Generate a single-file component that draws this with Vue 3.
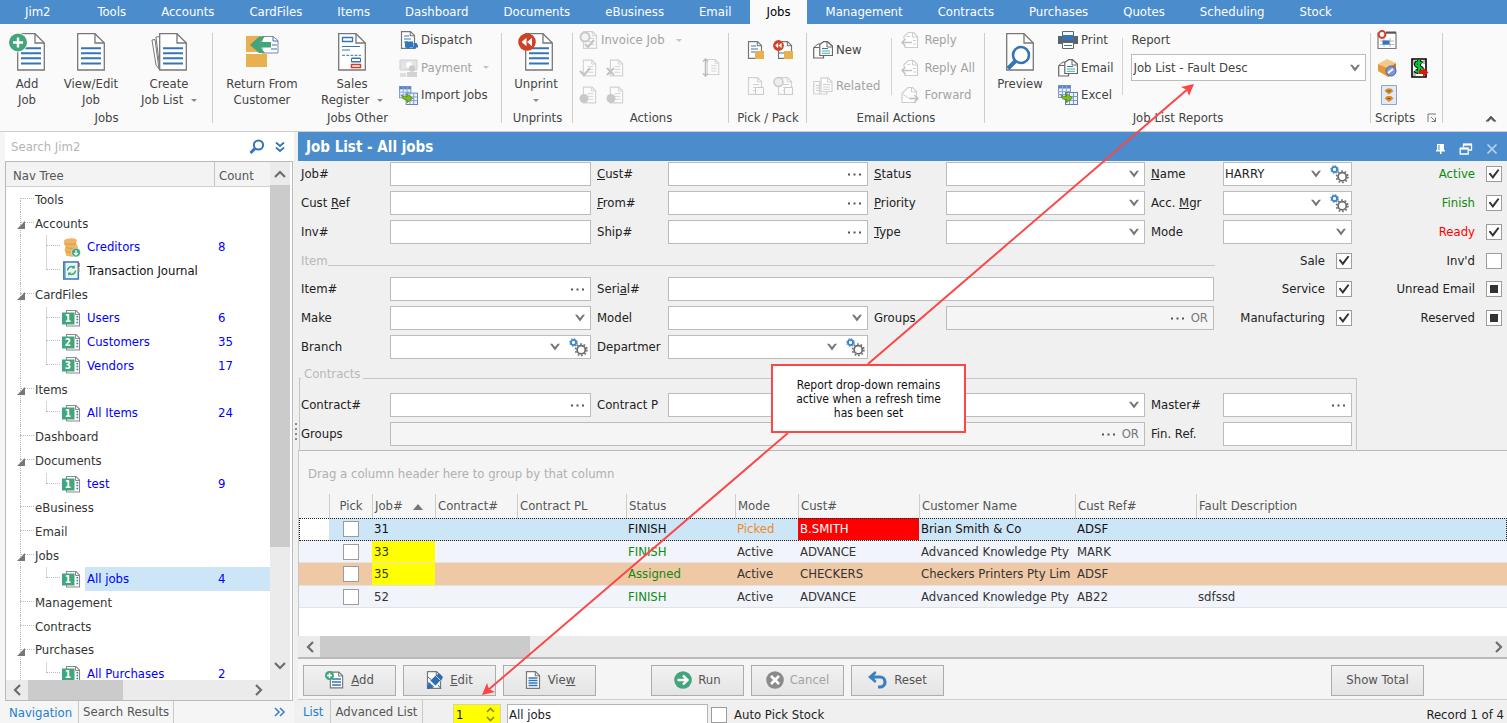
<script setup>
import { ref } from 'vue'

const tabs = ['Jim2', 'Tools', 'Accounts', 'CardFiles', 'Items', 'Dashboard', 'Documents', 'eBusiness', 'Email', 'Jobs', 'Management', 'Contracts', 'Purchases', 'Quotes', 'Scheduling', 'Stock']

const tree = [
  { t: 'Tools' },
  { t: 'Accounts', open: true },
  { t: 'Creditors', n: 8, icon: 'coins', child: true, more: true },
  { t: 'Transaction Journal', icon: 'journal', child: true, plain: true },
  { t: 'CardFiles', open: true },
  { t: 'Users', n: 6, icon: 'list', num: 1, child: true, more: true },
  { t: 'Customers', n: 35, icon: 'list', num: 2, child: true, more: true },
  { t: 'Vendors', n: 17, icon: 'list', num: 3, child: true },
  { t: 'Items', open: true },
  { t: 'All Items', n: 24, icon: 'list', num: 1, child: true },
  { t: 'Dashboard' },
  { t: 'Documents', open: true },
  { t: 'test', n: 9, icon: 'list', num: 1, child: true },
  { t: 'eBusiness' },
  { t: 'Email' },
  { t: 'Jobs', open: true },
  { t: 'All jobs', n: 4, icon: 'list', num: 1, child: true, sel: true },
  { t: 'Management' },
  { t: 'Contracts' },
  { t: 'Purchases', open: true },
  { t: 'All Purchases', n: 2, icon: 'list', num: 1, child: true }
]

// label: [before, access key, after]; row and col are grid lines, span is the number of tracks
const mainFields = [
  { id: 'job', label: ['Job#'], row: 1, col: 1, kind: 'text' },
  { id: 'cust', label: ['', 'C', 'ust#'], row: 1, col: 3, kind: 'dots' },
  { id: 'status', label: ['', 'S', 'tatus'], row: 1, col: 5, kind: 'select' },
  { id: 'name', label: ['', 'N', 'ame'], row: 1, col: 7, kind: 'gear', value: 'HARRY' },
  { id: 'custref', label: ['Cust ', 'R', 'ef'], row: 2, col: 1, kind: 'text' },
  { id: 'from', label: ['', 'F', 'rom#'], row: 2, col: 3, kind: 'dots' },
  { id: 'priority', label: ['', 'P', 'riority'], row: 2, col: 5, kind: 'select' },
  { id: 'accmgr', label: ['Acc. ', 'M', 'gr'], row: 2, col: 7, kind: 'gear' },
  { id: 'inv', label: ['Inv#'], row: 3, col: 1, kind: 'text' },
  { id: 'ship', label: ['Ship#'], row: 3, col: 3, kind: 'dots' },
  { id: 'type', label: ['', 'T', 'ype'], row: 3, col: 5, kind: 'select' },
  { id: 'mode', label: ['Mode'], row: 3, col: 7, kind: 'select' },
  { id: 'item', label: ['Item#'], row: 5, col: 1, kind: 'dots' },
  { id: 'serial', label: ['Seri', 'a', 'l#'], row: 5, col: 3, kind: 'text', span: 4, wide: true },
  { id: 'make', label: ['Make'], row: 6, col: 1, kind: 'select' },
  { id: 'model', label: ['Model'], row: 6, col: 3, kind: 'select' },
  { id: 'groups', label: ['Groups'], row: 6, col: 5, kind: 'or', span: 2, wide: true },
  { id: 'branch', label: ['Branch'], row: 7, col: 1, kind: 'gear' },
  { id: 'department', label: ['Departmer'], row: 7, col: 3, kind: 'gear' }
]
const contractFields = [
  { id: 'contract', label: ['Contract#'], row: 1, col: 1, kind: 'dots' },
  { id: 'contractpl', label: ['Contract P'], row: 1, col: 3, kind: 'select', span: 3 },
  { id: 'master', label: ['Master#'], row: 1, col: 7, kind: 'dots' },
  { id: 'cgroups', label: ['Groups'], row: 2, col: 1, kind: 'or', span: 5 },
  { id: 'finref', label: ['Fin. Ref.'], row: 2, col: 7, kind: 'text' }
]
const fieldSets = { main: mainFields, contracts: contractFields }

const checks = ref([
  { t: 'Active', row: 1, col: 9, on: true, tone: 'green' },
  { t: 'Finish', row: 2, col: 9, on: true, tone: 'green' },
  { t: 'Ready', row: 3, col: 9, on: true, tone: 'red' },
  { t: 'Sale', row: 4, col: 8, on: true },
  { t: "Inv'd", row: 4, col: 9, on: false },
  { t: 'Service', row: 5, col: 8, on: true },
  { t: 'Unread Email', row: 5, col: 9, on: false, mixed: true },
  { t: 'Manufacturing', row: 6, col: 8, on: true },
  { t: 'Reserved', row: 6, col: 9, on: false, mixed: true }
])

const jobs = [
  { id: 31, status: 'FINISH', mode: 'Picked', cust: 'B.SMITH', name: 'Brian Smith & Co', ref: 'ADSF', fault: '', cls: 'current' },
  { id: 33, status: 'FINISH', mode: 'Active', cust: 'ADVANCE', name: 'Advanced Knowledge Pty', ref: 'MARK', fault: '', flag: true },
  { id: 35, status: 'Assigned', mode: 'Active', cust: 'CHECKERS', name: 'Checkers Printers Pty Lim', ref: 'ADSF', fault: '', flag: true, cls: 'assigned' },
  { id: 52, status: 'FINISH', mode: 'Active', cust: 'ADVANCE', name: 'Advanced Knowledge Pty', ref: 'AB22', fault: 'sdfssd' }
]

const place = f => ({ gridRow: f.row, gridColumn: `${f.col + 1} / span ${f.span || 1}` })
const placeLabel = f => ({ gridRow: f.row, gridColumn: f.col })
</script>

<template>
  <svg class="defs" aria-hidden="true">
    <symbol id="page" viewBox="0 0 28 38">
      <path d="M.7 .7H18L27.3 10V37H.7Z" fill="#fff" stroke="#777" stroke-width="1.3" />
      <path d="M18 .7V10h9.3" fill="none" stroke="#777" stroke-width="1.3" />
    </symbol>
    <symbol id="lines" viewBox="0 0 28 38">
      <path d="M4 15.3h20M4 20.3h20M4 25.3h20M4 30.5h20" stroke="#3474b9" stroke-width="1.9" />
    </symbol>
    <symbol id="rewind" viewBox="0 0 18 18">
      <circle cx="9" cy="9" r="8.8" fill="#cf4127" />
      <path d="M8.5 4.7v8.6L3.6 9zM14 4.7v8.6L9.1 9z" fill="#fff" />
    </symbol>
    <symbol id="spage" viewBox="0 0 18 18">
      <path d="M2.5 .6h9l4 4v12.8h-13z" fill="#fff" stroke="currentColor" stroke-width="1.2" />
      <path d="M11.3 .6v4.2h4.2" fill="none" stroke="currentColor" stroke-width="1.1" />
    </symbol>
    <symbol id="mail" viewBox="0 0 20 18">
      <path d="M.7 6.5h5.5M.7 6.5V17h9.8v-2.2" fill="none" stroke="#666" stroke-width="1.2" />
      <path d="M.7 6.5 5 3h2" fill="none" stroke="#666" />
      <path d="M6.8 3.5 10.5.7h4l5 4.5v9.3H6.8z" fill="#fff" stroke="#666" stroke-width="1.2" />
      <path d="M14 1v5h5" fill="none" stroke="#666" />
      <path d="M9 7.5h6" stroke="#3474b9" /><path d="M9 10h8M9 12.3h8" stroke="#45b28a" />
    </symbol>
    <symbol id="related" viewBox="0 0 20 18">
      <path d="M.7 4.5h6V17h7V14M.7 4.5V17h8" fill="none" stroke="#cfcfcf" stroke-width="1.2" />
      <path d="M8 .8h7l4 4v9.7H8z" fill="#fff" stroke="#cfcfcf" stroke-width="1.2" />
      <path d="M14.5 1v4H19M10 7.5h7M10 10h7M10 12.3h7M3 8.5h4M3 11h4M3 13.5h4" fill="none" stroke="#cfcfcf" />
    </symbol>
    <symbol id="reply" viewBox="0 0 18 18">
      <path d="M3 8V5.500L7.500 1.500h5l4 4V16.500H4V15" fill="#fff" stroke="#cdcdcd" stroke-width="1.2" />
      <path d="M11.500 1.500v4.500h5M6 5.500h3M12 9.500h3M12 13h3" fill="none" stroke="#cdcdcd" />
      <path d="M11 11.500H1M4.500 8 1 11.500 4.500 15" fill="none" stroke="#c2c2c2" stroke-width="1.500" />
    </symbol>
    <symbol id="forward" viewBox="0 0 18 18">
      <path d="M1 7.500 7 1.500h4.500l4 4V9M15 16.500H1v-9" fill="#fff" stroke="#cdcdcd" stroke-width="1.2" />
      <path d="M1.500 8 7 12M10.500 1.500V6h5" fill="none" stroke="#cdcdcd" />
      <path d="M8 12.500h9M13.500 9l3.500 3.500L13.500 16" fill="none" stroke="#bdbdbd" stroke-width="1.500" />
    </symbol>
    <symbol id="sheet" viewBox="0 0 20 20">
      <rect x=".5" y=".5" width="12" height="12" fill="#e8f0fa" stroke="#7a9bd0" />
      <path d="M.5 2h12" stroke="#5b83c6" stroke-width="3" />
      <path d="M4.500 1v11M8.500 1v11M.5 6.500h12M.5 9.500h12" stroke="#8fabd8" />
      <rect x="7.500" y="7.500" width="12" height="12" fill="#eef3fb" stroke="#5d7fb8" />
      <path d="M11.500 8v11M15.500 8v11M7.500 11.500h12M7.500 15.500h12" stroke="#7d9acb" />
      <path d="M3 9.500c1 2 3 2 5.500 1.700V8.300l6 4.700-6 4.500v-3C5.500 15 3 13.500 3 9.500z" fill="#7fbf1d" stroke="#4c8207" stroke-width=".8" />
    </symbol>
    <symbol id="chev" viewBox="0 0 12 8"><path d="M1 .8h2.300L6 4l2.700-3.200H11L6 7.500z" fill="#757575" /></symbol>
    <symbol id="dots" viewBox="0 0 14 3"><path d="M0 .5h2v2H0zM5.500 .5h2v2h-2zM11 .5h2v2h-2z" fill="#555" /></symbol>
    <symbol id="gears" viewBox="0 0 19 19">
      <circle cx="4.500" cy="4.500" r="2.600" fill="none" stroke="#3d84c6" stroke-width="1.900" />
      <circle cx="4.500" cy="4.500" r="3.900" fill="none" stroke="#3d84c6" stroke-width="1" stroke-dasharray="1.500 1.560" />
      <circle cx="12.200" cy="11.800" r="4.100" fill="none" stroke="#6d6d6d" stroke-width="1.800" />
      <circle cx="12.200" cy="11.800" r="5.700" fill="none" stroke="#6d6d6d" stroke-width="1.600" stroke-dasharray="1.700 1.880" />
    </symbol>
    <symbol id="coins" viewBox="0 0 19 19">
      <path d="M2 2.500C5-.5 13-.5 15 2l-1 3.500 2 3-.500 3L17 15l-1 2.500c-3 1.500-9 1.500-12 0l-.500-3L2.500 12l1-3L2 6z" fill="#edb565" />
      <path d="M3 5.500c3 1.200 8 1.200 11 0M4 9.500c3 1.200 8 1.200 11 0M4 13.500c3 1.200 6 1 8 .500" stroke="#d99c45" fill="none" />
      <circle cx="14" cy="14.500" r="4.500" fill="#45a67e" stroke="#fff" stroke-width=".6" />
      <path d="M14 12v5M12 15l2 2 2-2" stroke="#fff" fill="none" stroke-width="1.200" />
    </symbol>
    <symbol id="journal" viewBox="0 0 19 19">
      <rect x="1.800" y="1" width="14.500" height="17" fill="#eef6f3" stroke="#4180bd" stroke-width="1.600" />
      <path d="M3 1v17" stroke="#4180bd" /><path d="M17.200 2v4" stroke="#d24a35" /><path d="M17.200 7v4" stroke="#e8b04c" />
      <path d="M5.500 9.500a4 4 0 0 1 6.500-3M13.500 9.500a4 4 0 0 1-6.500 3" fill="none" stroke="#2fa878" stroke-width="1.500" />
      <path d="M12.800 4v3.500H9.500zM6.200 15v-3.500h3.300z" fill="#2fa878" />
    </symbol>
    <symbol id="list" viewBox="0 0 19 19">
      <path d="M4.500 4V1.500h9.500l3.500 3.500v12H4.500V15" fill="#fff" stroke="#8a8a8a" stroke-width="1.100" />
      <path d="M13.500 1.500V5.500h4" fill="none" stroke="#8a8a8a" />
      <path d="M14.500 7.800h1.600M14.500 10.600h1.600M14.500 13.400h1.600" stroke="#3474b9" stroke-width="1.500" />
      <rect y="3.500" width="12.500" height="12" fill="#43a57c" />
    </symbol>
    <symbol id="foldpage" viewBox="0 0 18 18">
      <path d="M2.500.6h9l4 4v12.800h-13z" fill="#fbfbfb" stroke="#d2d2d2" stroke-width="1.200" />
      <path d="M11.300.6v4.200h4.200M7 7.500h6M7 10.500h6M7 13.500h6" fill="none" stroke="#d2d2d2" />
    </symbol>
  </svg>

  <div class="app">
    <nav class="tabs" aria-label="Ribbon tabs">
      <button v-for="t in tabs" :key="t" type="button" :class="{ active: t === 'Jobs', first: t === 'Jim2' }">{{ t }}</button>
    </nav>

    <div class="ribbon">
      <section class="group g-jobs">
        <div class="body">
          <button type="button" class="big w-add">
            <svg width="36" height="38"><use href="#page" x="8" width="28" height="38" /><use href="#lines" x="8" width="28" height="38" /><circle cx="9" cy="9.500" r="9.800" fill="#fff" /><circle cx="9" cy="9.500" r="9" fill="#43a57c" /><path d="M9 4.500v10M4 9.500h10" stroke="#fff" stroke-width="2.400" /></svg>
            <span>Add<br>Job</span>
          </button>
          <button type="button" class="big w-view">
            <svg width="28" height="38"><use href="#page" width="28" height="38" /><use href="#lines" width="28" height="38" /></svg>
            <span>View/Edit<br>Job</span>
          </button>
          <button type="button" class="big w-create">
            <svg width="36" height="38"><path d="M1 7l3-.500L8 36 5 32zM5 4l4-.500V37z" fill="#fff" stroke="#777" /><use href="#page" x="8" width="28" height="38" /><use href="#lines" x="8" width="28" height="38" /></svg>
            <span>Create<br>Job List <i class="caret"></i></span>
          </button>
        </div>
        <h2>Jobs</h2>
      </section>

      <section class="group g-other">
        <div class="body">
          <button type="button" class="big w-return">
            <svg width="34" height="38"><path d="M1 3h15v16H1zM1 21h21v13H1z" fill="#e9b04f" /><path d="M17 3.500h11l5 4V20H17z" fill="#fff" stroke="#888" /><path d="M28 3.500v4.500h5M27 12h5M26 16h6" fill="none" stroke="#3474b9" /><path d="M14 3.500h6l-4.500 5.500H26v5.500H15.500L20 20h-6L5 12z" fill="#43a57c" /></svg>
            <span>Return From<br>Customer</span>
          </button>
          <button type="button" class="big w-sales">
            <svg width="28" height="38"><use href="#page" width="28" height="38" /><path d="M4.500 4.500h10v4h-10z" fill="none" stroke="#3474b9" stroke-width="1.300" /><path d="M4 13.500h18M4 17h8M13.500 25h9M13.500 28.500h9" stroke="#3474b9" stroke-width="1.200" /><path d="M4 22.300h19" stroke="#3474b9" stroke-dasharray="3 1.200" /><path d="M13.500 25.500h9v3.500h-9z" fill="none" stroke="#3474b9" /><path d="M13.500 31.500h9v3h-9z" fill="#fff" stroke="#d43c28" stroke-width="1.500" /></svg>
            <span>Sales<br>Register <i class="caret"></i></span>
          </button>
          <div class="stack">
            <button type="button"><svg width="19" height="18"><use href="#spage" width="18" height="18" class="ink" /><path d="M5 5h5M5 8h7M5 11h4" stroke="#3474b9" /><path d="M6 10.500h8v6H6z" fill="#2f74bd" /><path d="M14.500 12h3l1.500 2.500v2h-4.500z" fill="#2f74bd" /><circle cx="9" cy="16.500" r="1.500" fill="#2f74bd" /><circle cx="15.500" cy="16.500" r="1.500" fill="#2f74bd" /></svg>Dispatch</button>
            <button type="button" class="off"><svg width="19" height="18"><path d="M1 1h17v10H1z" fill="#e4e4e4" stroke="#cfcfcf" /><circle cx="10" cy="6" r="3" fill="#fff" /><circle cx="13" cy="9.500" r="3.200" fill="#cacaca" /><path d="M8 13h10v5H8z" fill="#d2d2d2" /><path d="M1 14h6v4H1z" fill="#ddd" /></svg>Payment <i class="caret"></i></button>
            <button type="button"><svg width="19" height="19"><use href="#sheet" width="19" height="19" /></svg>Import Jobs</button>
          </div>
        </div>
        <h2>Jobs Other</h2>
      </section>

      <section class="group g-unprint">
        <div class="body">
          <button type="button" class="big w-unprint">
            <svg width="36" height="38"><use href="#page" x="7" width="28" height="38" /><use href="#lines" x="7" width="28" height="38" /><use href="#rewind" width="18" height="18" /></svg>
            <span>Unprint<br><i class="caret"></i></span>
          </button>
        </div>
        <h2>Unprints</h2>
      </section>

      <section class="group g-actions">
        <div class="body stack wide">
          <button type="button" class="off"><svg width="19" height="18"><use href="#foldpage" x="2" width="18" height="18" /><circle cx="6" cy="6" r="4.500" fill="#f4f4f4" stroke="#c9c9c9" stroke-width="2" /><path d="M6 13l3 3 6-7" fill="none" stroke="#c4c4c4" stroke-width="2" /></svg>Invoice Job <i class="caret"></i></button>
          <div class="icons">
            <button type="button" aria-label="Approve"><svg width="19" height="18"><use href="#foldpage" x="2" width="17" height="18" /><path d="M1 12l4 4 6-7" fill="none" stroke="#c2c2c2" stroke-width="2" /></svg></button>
            <button type="button" aria-label="Reject"><svg width="19" height="18"><use href="#foldpage" x="2" width="17" height="18" /><path d="M1 9l7 7M8 9l-7 7" stroke="#c2c2c2" stroke-width="2" /></svg></button>
            <button type="button" aria-label="Resize" class="push"><svg width="19" height="19"><use href="#foldpage" x="3" width="16" height="18" /><path d="M3.500 1v17M1 3.500L3.500 1 6 3.500M1 15.500L3.500 18 6 15.500" fill="none" stroke="#bdbdbd" stroke-width="1.500" /></svg></button>
          </div>
          <div class="icons">
            <button type="button" aria-label="Add note"><svg width="19" height="18"><use href="#foldpage" x="2" width="17" height="18" /><circle cx="5" cy="12.500" r="4.500" fill="#c9c9c9" /></svg></button>
            <button type="button" aria-label="Add task"><svg width="19" height="18"><use href="#foldpage" x="2" width="17" height="18" /><circle cx="5" cy="12.500" r="4.500" fill="#c9c9c9" /></svg></button>
          </div>
        </div>
        <h2>Actions</h2>
      </section>

      <section class="group g-pick">
        <div class="body pair">
          <div class="icons">
            <button type="button" aria-label="Pick"><svg width="18" height="20"><use href="#spage" x="-1" y="1" width="18" height="18" class="ink" /><path d="M4 6h5M4 9h7M4 12h4" stroke="#3474b9" /><path d="M8 11h9v8H8z" fill="#e9b04f" /></svg></button>
            <button type="button" aria-label="Unpick"><svg width="20" height="20"><use href="#spage" x="3" y="1" width="18" height="18" class="ink" /><path d="M6 13h5" stroke="#3474b9" /><path d="M11 11h9v8h-9z" fill="#e9b04f" /><use href="#rewind" y="0" width="11" height="11" /></svg></button>
          </div>
          <div class="icons">
            <button type="button" aria-label="Pack"><svg width="18" height="20"><use href="#foldpage" x="-1" y="1" width="18" height="18" /><path d="M8.500 11.500h8v7h-8z" fill="#fafafa" stroke="#c9c9c9" /></svg></button>
            <button type="button" aria-label="Unpack"><svg width="20" height="20"><use href="#foldpage" x="3" y="1" width="18" height="18" /><path d="M11.500 11.500h8v7h-8z" fill="#fafafa" stroke="#c9c9c9" /><circle cx="5.500" cy="6" r="4.500" fill="#eee" stroke="#c9c9c9" stroke-width="1.500" /></svg></button>
          </div>
        </div>
        <h2>Pick / Pack</h2>
      </section>

      <section class="group g-email">
        <div class="body">
          <div class="stack pair">
            <button type="button"><svg width="20" height="20"><use href="#mail" width="20" height="20" /></svg>New</button>
            <button type="button" class="off"><svg width="20" height="20"><use href="#related" width="20" height="20" /></svg>Related</button>
          </div>
          <div class="stack ruled">
            <button type="button" class="off"><svg width="18" height="18"><use href="#reply" width="18" height="18" /></svg>Reply</button>
            <button type="button" class="off"><svg width="18" height="18"><use href="#reply" width="18" height="18" /></svg>Reply All</button>
            <button type="button" class="off"><svg width="18" height="18"><use href="#forward" width="18" height="18" /></svg>Forward</button>
          </div>
        </div>
        <h2>Email Actions</h2>
      </section>

      <section class="group g-reports">
        <div class="body">
          <button type="button" class="big w-preview">
            <svg width="28" height="38"><use href="#page" width="28" height="38" /><circle cx="15" cy="22" r="8" fill="#fff" stroke="#3474b9" stroke-width="2.600" /><path d="M9.500 28L2 35.500" stroke="#3474b9" stroke-width="4" /></svg>
            <span>Preview</span>
          </button>
          <div class="stack">
            <button type="button"><svg width="20" height="18"><path d="M4.500 .5h11v5h-11z" fill="#f6f6f6" stroke="#666" /><path d="M0 5h20v8H0z" fill="#59636e" /><path d="M4 4h12v4l-2 1H6L4 8z" fill="#3474b9" /><path d="M4.500 11.500h11v6h-11z" fill="#fff" stroke="#666" /><path d="M6 14.500h8" stroke="#3474b9" /></svg>Print</button>
            <button type="button"><svg width="20" height="20"><use href="#mail" width="20" height="20" /></svg>Email</button>
            <button type="button"><svg width="20" height="20"><use href="#sheet" width="20" height="20" /></svg>Excel</button>
          </div>
          <div class="report">
            <label for="report">Report</label>
            <div class="field">
              <select id="report"><option>Job List - Fault Desc</option></select>
              <svg width="12" height="8"><use href="#chev" /></svg>
            </div>
          </div>
        </div>
        <h2>Job List Reports</h2>
      </section>

      <section class="group g-scripts">
        <div class="body stack">
          <button type="button" aria-label="Schedule"><svg width="20" height="20"><path d="M1 3h18v15.500H1z" fill="#fff" stroke="#777" stroke-width="1.200" /><path d="M9 2.500h10" stroke="#555" stroke-width="2" /><path d="M3 11h14M3 14.500h14M7 8v9M13 8v9" stroke="#aaa" stroke-width=".8" /><path d="M5.500 10.500h7v4h-7z" fill="#2f74bd" /><circle cx="5" cy="4.500" r="3.400" fill="#fff" stroke="#cf4127" stroke-width="2" /></svg></button>
          <div class="icons">
            <button type="button" aria-label="Package script"><svg width="20" height="20"><path d="M1 6l9-5 9 4-8 5z" fill="#f7c883" /><path d="M1 6l10 4v9L1 13z" fill="#e59a35" /><path d="M11 10l8-5v9l-8 5z" fill="#c97b1e" /><circle cx="14" cy="13" r="5" fill="#7d96d6" stroke="#4a64ac" /><path d="M11 15l5-4" stroke="#fff" stroke-width="2" /></svg></button>
            <button type="button" aria-label="Payment script"><svg width="18" height="20"><path d="M1 1h14v18H1z" fill="#fff" stroke="#000" stroke-width="1.600" /><path d="M2 2h3v5H2zM12 2h2v4h-2zM2 13h3v5H2z" fill="#bbb" /><path d="M11 5.500C9 3.500 5 4 5 6.500s6 2 6 5-5 3-7 1M8 2v14" fill="none" stroke="#000" stroke-width="4" /><path d="M11 5.500C9 3.500 5 4 5 6.500s6 2 6 5-5 3-7 1M8 2v14" fill="none" stroke="#0c3" stroke-width="2" /><path d="M8 12h4V9.500l5.500 5-5.500 4.500v-3H8z" fill="#e01515" /></svg></button>
          </div>
          <button type="button" aria-label="Expand script" class="indent"><svg width="16" height="20"><path d="M.5.500h15v19H.5z" fill="#dfe9f8" stroke="#8aa6d6" /><path d="M3.500 6L6 3.500h4L12.500 6 8 9.500zM3.500 13.500L6 11h4l2.500 2.500L8 17z" fill="#d98a2b" /><path d="M6.500 6h3M6.500 13.500h3" stroke="#8a4c0c" /></svg></button>
        </div>
        <h2>Scripts <svg width="10" height="10"><path d="M1 9V1h8M4 4l4.500 4.500M8.500 4.500v4h-4" fill="none" stroke="#777" /></svg></h2>
      </section>

      <button type="button" class="collapse" aria-label="Collapse ribbon"><svg width="12" height="8"><path d="M1 7.200L6 2l5 5.200H8.600L6 4.600 3.400 7.200z" fill="#555" stroke="#555" stroke-width=".6" /></svg></button>
    </div>

    <div class="work">
      <aside class="side">
        <div class="search">
          <input type="text" placeholder="Search Jim2" aria-label="Search Jim2">
          <svg width="16" height="16"><circle cx="9.500" cy="6" r="4.600" fill="none" stroke="#3474b9" stroke-width="2" /><path d="M6 9.500L1.500 14" stroke="#3474b9" stroke-width="3" /></svg>
          <svg width="10" height="12"><path d="M1 1.500l4 3.500 4-3.500M1 6.500L5 10l4-3.500" fill="none" stroke="#3474b9" stroke-width="1.700" /></svg>
        </div>
        <div class="navbox">
          <div class="navmain">
            <div class="navhead"><span>Nav Tree</span><span>Count</span></div>
            <div class="treeview">
              <ul class="tree">
                <li v-for="(n, i) in tree" :key="i" :class="{ child: n.child, more: n.more, top: i === 0 }">
                  <i v-if="n.open" class="tri"></i>
                  <svg v-if="n.icon" width="19" height="19"><use :href="'#' + n.icon" width="19" height="19" /><text v-if="n.num" x="6" y="13" text-anchor="middle" class="num">{{ n.num }}</text></svg>
                  <a href="#" :class="{ sel: n.sel, plain: n.plain }"><span>{{ n.t }}</span><b>{{ n.n }}</b></a>
                </li>
              </ul>
            </div>
            <div class="hbar">
              <svg width="8" height="12"><path d="M7 1L2 6l5 5" fill="none" stroke="#6d6d6d" stroke-width="2.200" /></svg>
              <div class="track"><i class="hthumb"></i></div>
              <svg width="8" height="12"><path d="M1 1l5 5-5 5" fill="none" stroke="#6d6d6d" stroke-width="2.200" /></svg>
            </div>
          </div>
          <div class="vbar">
            <svg width="12" height="8"><path d="M1 7l5-5 5 5" fill="none" stroke="#6d6d6d" stroke-width="2.200" /></svg>
            <div class="vtrack"><i class="vthumb"></i></div>
            <svg width="12" height="8"><path d="M1 1l5 5 5-5" fill="none" stroke="#6d6d6d" stroke-width="2.200" /></svg>
          </div>
        </div>
        <div class="sidetabs">
          <button type="button" class="on">Navigation</button>
          <button type="button">Search Results</button>
          <svg width="12" height="10"><path d="M1 1l4 4-4 4M6 1l4 4-4 4" fill="none" stroke="#3d84c6" stroke-width="1.600" /></svg>
        </div>
      </aside>
      <div class="grip"><i></i><i></i><i></i><i></i></div>

      <main class="main">
        <header class="title">
          <h1>Job List - All jobs</h1>
          <button type="button" aria-label="Pin"><svg width="12" height="12"><path d="M3 1h7v6h1v1.500H7.500V11h-1.500V8.500H2V7h1z" fill="#fff" /><path d="M5 2v5" stroke="#4b8dcc" /></svg></button>
          <button type="button" aria-label="Restore"><svg width="14" height="12"><path d="M4.500 4V1.500h8V7H10" fill="none" stroke="#fff" stroke-width="1.300" /><path d="M4 1.500h9" stroke="#fff" stroke-width="2" /><path d="M1.200 5.500h8v5.500h-8z" fill="none" stroke="#fff" stroke-width="1.300" /><path d="M1 5.500h8.500" stroke="#fff" stroke-width="2" /></svg></button>
          <button type="button" aria-label="Close"><svg width="12" height="12"><path d="M1.500 1.500l9 9M10.500 1.500l-9 9" stroke="#b9d3ee" stroke-width="1.700" /></svg></button>
        </header>

        <form class="filters" @submit.prevent>
          <div v-for="(list, key) in fieldSets" :key="key" :class="['fields', key]">
            <template v-for="f in list" :key="f.id">
              <label :for="f.id" :class="{ flush: f.col === 1 }" :style="placeLabel(f)">{{ f.label[0] }}<u v-if="f.label[1]">{{ f.label[1] }}</u>{{ f.label[2] }}</label>
              <div :class="['field', f.kind, { wide: f.wide }]" :style="place(f)">
                <select v-if="f.kind === 'select' || f.kind === 'gear'" :id="f.id"><option>{{ f.value || '' }}</option></select>
                <input v-else :id="f.id" type="text" :readonly="f.kind === 'or'">
                <svg v-if="f.kind === 'select' || f.kind === 'gear'" width="12" height="8"><use href="#chev" /></svg>
                <svg v-if="f.kind === 'gear'" class="gears" width="19" height="19"><use href="#gears" /></svg>
                <svg v-if="f.kind === 'dots' || f.kind === 'or'" width="14" height="3"><use href="#dots" /></svg>
                <span v-if="f.kind === 'or'">OR</span>
              </div>
            </template>
            <template v-if="key === 'main'">
              <div class="legend">Item<i></i></div>
              <label v-for="c in checks" :key="c.t" :class="['check', c.tone, { edge: c.col === 9 }]" :style="placeLabel(c)">
                {{ c.t }}<input v-model="c.on" type="checkbox" :indeterminate.prop="!!c.mixed">
              </label>
            </template>
            <div v-else class="legend">Contracts<i></i></div>
          </div>
        </form>

        <div class="results">
          <p class="grouphint">Drag a column header here to group by that column</p>
          <table>
            <colgroup><col class="c-ind"><col class="c-pick"><col class="c-job"><col class="c-con"><col class="c-mid"><col class="c-mid"><col class="c-job"><col class="c-cust"><col class="c-name"><col class="c-cust"><col></colgroup>
            <thead>
              <tr><th></th><th class="center">Pick</th><th>Job# <i class="sort"></i></th><th>Contract#</th><th>Contract PL</th><th>Status</th><th>Mode</th><th>Cust#</th><th>Customer Name</th><th>Cust Ref#</th><th>Fault Description</th></tr>
            </thead>
            <tbody>
              <tr v-for="j in jobs" :key="j.id" :class="j.cls">
                <td></td>
                <td class="center"><input type="checkbox" :aria-label="'Pick job ' + j.id"></td>
                <td :class="{ flag: j.flag }">{{ j.id }}</td><td></td><td></td>
                <td class="st">{{ j.status }}</td><td class="md">{{ j.mode }}</td><td class="cu">{{ j.cust }}</td>
                <td>{{ j.name }}</td><td>{{ j.ref }}</td><td>{{ j.fault }}</td>
              </tr>
            </tbody>
          </table>
        </div>
        <div class="hbar wide">
          <svg width="8" height="12"><path d="M7 1L2 6l5 5" fill="none" stroke="#6d6d6d" stroke-width="2.200" /></svg>
          <div class="track"><i class="hthumb"></i></div>
          <svg width="8" height="12"><path d="M1 1l5 5-5 5" fill="none" stroke="#6d6d6d" stroke-width="2.200" /></svg>
        </div>

        <div class="buttons">
          <button type="button"><svg width="20" height="18"><use href="#spage" x="3" width="17" height="18" class="ink" /><path d="M7 8h9M7 11h9M7 14h9" stroke="#3474b9" stroke-width="1.300" /><circle cx="4.500" cy="4.500" r="4.500" fill="#43a57c" /><path d="M4.500 2v5M2 4.500h5" stroke="#fff" stroke-width="1.500" /></svg><span><u>A</u>dd</span></button>
          <button type="button"><svg width="18" height="19"><use href="#spage" x="-1" width="18" height="18" class="ink" /><path d="M9.500 4.500l4-2 3.500 3.500-2 4z" fill="#2f6db0" /><path d="M4 9.500l5.500-5 5 5-5 5.500z" fill="#2f6db0" stroke="#fff" stroke-width=".6" /><path d="M1.500 17.500l1.500-6 4.500 4.500zM2 6l3 2.500M12 14l3 3.500" fill="#2f6db0" stroke="#2f6db0" /></svg><span><u>E</u>dit</span></button>
          <button type="button"><svg width="18" height="18"><use href="#spage" width="18" height="18" class="ink" /><path d="M4.500 7h9M4.500 9.500h9M4.500 12h9M4.500 14.500h9" stroke="#3474b9" stroke-width="1.300" /></svg><span>Vie<u>w</u></span></button>
          <button type="button" class="run"><svg width="18" height="18"><circle cx="9" cy="9" r="8.800" fill="#43a57c" /><path d="M3.500 9h9M9 4.500L13.500 9 9 13.500" fill="none" stroke="#fff" stroke-width="2.400" /></svg><span>Run</span></button>
          <button type="button" class="cancel"><svg width="18" height="18"><circle cx="9" cy="9" r="8.800" fill="#8b8b8b" /><path d="M5 5l8 8M13 5l-8 8" stroke="#fff" stroke-width="2.600" /></svg><span>Cancel</span></button>
          <button type="button"><svg width="20" height="18"><path d="M3 6h9a5 5 0 0 1 0 10h-2" fill="none" stroke="#3f7fc0" stroke-width="3.200" /><path d="M0 6L7 0l1.500 2L5 6l3.500 4L7 12z" fill="#3f7fc0" /></svg><span>Reset</span></button>
          <button type="button" class="total">Show Total</button>
        </div>

        <footer class="foot">
          <button type="button" class="on">List</button>
          <button type="button" class="adv">Advanced List</button>
          <div class="spin">
            <input type="number" value="1" aria-label="Refresh time">
            <svg width="9" height="15"><path d="M1 5l3.500-3.500L8 5M1 10l3.500 3.500L8 10" fill="none" stroke="#8a8a2a" stroke-width="1.700" /></svg>
          </div>
          <input class="listname" type="text" value="All jobs" aria-label="List name">
          <label><input type="checkbox">Auto Pick Stock</label>
          <span class="record">Record 1 of 4</span>
        </footer>
      </main>
    </div>

    <svg class="arrows" width="1507" height="723" aria-hidden="true">
      <g stroke="#fb4748" stroke-width="2" fill="#fb4748">
        <path d="M868 364L1189 88M788 433L487 691" />
        <path d="M1194 84l-5 12-2-6-6-3zM482 695l5-12 2 6 6 3z" stroke="none" />
      </g>
    </svg>
    <div class="callout">Report drop-down remains active when a refresh time has been set</div>
  </div>
</template>

<style>
body { margin: 0; overflow: hidden; }
</style>

<style scoped>
* { box-sizing: border-box; }
.defs { position: absolute; width: 0; height: 0; }
.app { position: relative; height: 100vh; display: flex; flex-direction: column; overflow: hidden; background: #f0f0f0; color: #1e1e1e; font: 13px/16px "DejaVu Sans Condensed", "Noto Sans", sans-serif; }
button, input, select { font: inherit; color: inherit; margin: 0; }
button { padding: 0; border: 0; background: none; white-space: nowrap; }
svg { flex: none; display: block; }
h1, h2, p, ul { margin: 0; padding: 0; font: inherit; }
.ink { color: #777; }

.tabs { height: 24px; display: flex; gap: 3px; background: #4b8dcc; flex: none; }
.tabs button { padding: 0 16px; color: #fff; line-height: 24px; }
.tabs .first { padding: 0 28px 0 25px; }
.tabs .active { background: #fafafa; color: #000; }

.ribbon { height: 108px; flex: none; display: flex; background: #fafafa; border-bottom: 1px solid #cfcfcf; color: #444; }
.group { display: flex; flex-direction: column; padding-top: 7px; flex: none; background: linear-gradient(#cdcdcd, #cdcdcd) right 9px / 1px 90px no-repeat; }
.group h2 { margin-top: auto; padding-bottom: 5px; text-align: center; white-space: nowrap; }
.body { display: flex; height: 77px; }
.g-jobs { width: 213px; }
.g-other { width: 289px; }
.g-unprint { width: 71px; }
.g-actions { width: 156px; }
.g-pick { width: 78px; }
.g-email { width: 178px; }
.g-reports { width: 386px; }
.g-scripts { width: 72px; }
.big { display: flex; flex-direction: column; align-items: center; padding-top: 2px; gap: 5px; }
.big span { text-align: center; white-space: nowrap; }
.w-add { width: 54px; }
.w-view { width: 74px; }
.w-create { width: 82px; }
.w-return { width: 86px; margin-left: 6px; }
.w-sales { width: 94px; }
.w-unprint { width: 68px; }
.w-preview { width: 70px; }
.caret { display: inline-block; margin-left: 4px; border: 3px solid transparent; border-top-color: #888; border-bottom: 0; vertical-align: 2px; }
.w-unprint .caret { margin: 0; }
.stack { display: flex; flex-direction: column; align-items: flex-start; justify-content: space-between; height: 73px; }
.stack button { display: flex; align-items: center; gap: 3px; height: 18px; }
.stack .caret { margin-left: 8px; }
.off { color: #a3a3a3; }
.off .caret { border-top-color: #c4c4c4; }
.icons { display: flex; gap: 8px; align-items: center; height: 18px; }
.g-actions .body { margin: 0 8px 0 6px; align-items: stretch; }
.push { margin-left: auto; }
.pair { display: flex; flex-direction: column; justify-content: flex-start; gap: 18px; padding-top: 10px; height: 73px; }
.g-pick .body { padding-left: 18px; }
.g-email .body { padding-left: 6px; }
.g-email .ruled { margin-left: 4px; padding-left: 17px; background: linear-gradient(#d2d2d2, #d2d2d2) 7px 7px / 1px 57px no-repeat; }
.g-email .ruled button { gap: 5px; }
.g-reports .stack { margin-left: 3px; }
.report { flex: 1; margin: 0 5px 0 9px; padding-left: 9px; background: linear-gradient(#d2d2d2, #d2d2d2) left 7px / 1px 57px no-repeat; }
.report label { display: block; line-height: 18px; margin-bottom: 5px; }
.report .field { height: 27px; padding-right: 4px; }
.report select { padding-left: 2px; }
.g-scripts .body { padding-left: 6px; }
.g-scripts .icons { gap: 14px; }
.g-scripts .indent { margin-left: 4px; }
.g-scripts h2 { display: flex; align-items: center; justify-content: space-between; padding: 0 6px 5px 4px; }
.collapse { margin: auto 10px 9px auto; }

.work { flex: 1; min-height: 0; display: flex; }
.side { width: 294px; flex: none; display: flex; flex-direction: column; padding-left: 5px; background: #f5f5f5; }
.search { height: 29px; flex: none; display: flex; align-items: center; gap: 10px; padding-right: 9px; background: #fff; }
.search input { flex: 1; min-width: 0; border: 0; background: none; padding: 0 6px; outline: 0; }
.search input::placeholder { color: #b5b5b5; opacity: 1; }
.navbox { flex: 1; min-height: 0; display: flex; margin-right: 1px; padding-right: 2px; border: 1px solid #b9b9b9; background: #fff; }
.navmain { flex: 1; min-width: 0; display: flex; flex-direction: column; }
.navhead { height: 25px; flex: none; display: flex; line-height: 27px; color: #555; background: #f3f3f3; border-bottom: 1px solid #cfcfcf; }
.navhead span:first-child { flex: 1; padding-left: 7px; }
.navhead span:last-child { width: 56px; padding-left: 4px; border-left: 1px solid #c4c4c4; }
.treeview { flex: 1; min-height: 0; overflow: hidden; padding-top: 1px; }
.tree { list-style: none; height: 498px; display: grid; grid-auto-rows: 1fr; }
.tree li { position: relative; display: flex; align-items: center; padding-left: 26px; }
.tree li::before { content: ""; position: absolute; left: 14px; top: 0; bottom: 0; border-left: 1px dotted #bbb; }
.tree .top::before { top: 50%; }
.tree li::after { content: ""; position: absolute; left: 14px; top: 10px; width: 14px; border-top: 1px dotted #bbb; }
.tree .child { padding-left: 56px; background: linear-gradient(#d8d8d8, #d8d8d8) 40px 0 / 1px 10px no-repeat; }
.tree .more { background-size: 1px 100%; }
.tree .child::after { left: 40px; }
.tri { position: absolute; left: 11px; top: 9px; z-index: 1; border-left: 8px solid transparent; border-bottom: 8px solid #777; }
.num { fill: #fff; font-size: 10px; font-weight: bold; }
.tree a { flex: 1; align-self: stretch; display: flex; align-items: center; padding-left: 3px; color: #333; text-decoration: none; white-space: nowrap; }
.tree .child a { margin-left: 4px; padding-left: 2px; color: #00f; }
.tree .child .plain { color: #111; }
.tree a span { flex: 1; }
.tree a b { width: 52px; font-weight: normal; }
.tree .sel { background: #cce5f7; }
.hbar { height: 20px; flex: none; display: flex; align-items: center; background: #ebebeb; padding: 0 7px 0 7px; gap: 7px; }
.track { flex: 1; align-self: stretch; }
.hthumb { display: block; width: 43%; height: 100%; background: #cbcbcb; }
.vbar { width: 20px; flex: none; display: flex; flex-direction: column; align-items: center; background: #ebebeb; padding: 8px 0 30px; gap: 7px; }
.vtrack { flex: 1; align-self: stretch; }
.vthumb { display: block; height: 77%; background: #cbcbcb; }
.sidetabs { height: 22px; flex: none; display: flex; align-items: center; color: #555; }
.sidetabs button { padding: 0 4px; height: 22px; }
.sidetabs .on { color: #1c7fd0; padding: 2px 6px 0 4px; }
.sidetabs button:nth-child(2) { border: solid #c9c9c9; border-width: 0 1px; }
.sidetabs svg { margin: 0 8px 0 auto; }
.grip { width: 4px; flex: none; display: flex; flex-direction: column; align-items: center; gap: 3px; padding-top: 291px; }
.grip i { width: 2px; height: 2px; background: #888; }

.main { flex: 1; min-width: 0; display: flex; flex-direction: column; }
.title { height: 29px; flex: none; display: flex; align-items: center; gap: 13px; padding: 0 9px 0 8px; background: #4b8dcc; color: #fff; }
.title h1 { flex: 1; font-size: 15px; font-weight: bold; }
.title button { padding-top: 4px; }
.filters { flex: none; height: 290px; padding: 1px 0 0 3px; border-bottom: 1px solid #b9b9b9; }
.fields { display: grid; grid-template-columns: 89px 201fr 77px 200fr 78px 199fr 78px 129fr 155px; grid-template-rows: 24px 24px 24px 23px; grid-auto-rows: 24px; row-gap: 5px; align-items: center; }
.fields label { white-space: nowrap; color: #222; padding-left: 6px; }
.fields .flush { padding-left: 0; }
.field { display: flex; align-items: center; height: 24px; border: 1px solid #bcbcbc; background: #fff; padding-right: 5px; min-width: 0; }
.field input, .field select { flex: 1; min-width: 0; width: 0; height: 100%; padding: 0 1px; border: 0; background: none; appearance: none; outline: 0; }
.field.select { padding-right: 4px; }
.field.gear { padding-right: 2px; }
.gears { margin-left: 8px; }
.field.wide { margin-right: 9px; }
.field.or { background: #f5f5f5; color: #777; gap: 6px; }
.legend { grid-row: 4; grid-column: 1 / 8; display: flex; color: #b5b9bd; margin-right: 8px; }
.legend i { flex: 1; height: 1px; background: #c3c7ca; margin-top: 12px; }
.fields .check { display: flex; align-items: center; justify-content: flex-end; gap: 11px; padding: 0; }
.fields .edge { padding-right: 5px; }
.st { color: #108a10; }
.fields .green { color: #108a10; }
.fields .red { color: #f00; }
.contracts { position: relative; grid-template-columns: 89px 201fr 77px 200fr 78px 199fr 78px 129fr 4px; grid-template-rows: 24px 24px; margin: 19px 150px 0 -2px; padding: 14px 0 5px 1px; border: solid #c3c7ca; border-width: 1px 1px 0; }
.contracts .legend { position: absolute; left: 0; top: -13px; padding: 0 3px; background: #f0f0f0; }
.contracts .legend i { display: none; }
input[type="checkbox"] { appearance: none; flex: none; width: 16px; height: 16px; border: 1px solid #9c9c9c; background: #fff; display: grid; place-items: center; }
input[type="checkbox"]:checked::before { content: ""; width: 11px; height: 10px; background: #333; clip-path: polygon(0 45%, 18% 38%, 38% 68%, 84% 2%, 100% 10%, 40% 100%); }
input[type="checkbox"]:indeterminate::before { content: ""; width: 8px; height: 8px; background: #333; }

.results { flex: 1; min-height: 0; overflow: hidden; background: #fff; border-left: 1px solid #c9c9c9; }
.grouphint { height: 43px; padding: 0 9px; line-height: 46px; color: #b0b0b0; background: #f5f5f5; }
table { width: 100%; table-layout: fixed; border-collapse: separate; border-spacing: 0; }
th, td { padding: 0 0 0 2px; text-align: left; font-weight: normal; white-space: nowrap; overflow: hidden; line-height: 16px; }
th { height: 24px; background: #f5f5f5; color: #555; border-left: 1px solid #cdcdcd; }
th:first-child { border-left: 0; }
th.center, td.center { padding: 0; text-align: center; }
td.center input { margin: 0 auto; }
.sort { display: inline-block; margin-left: 6px; border: 5px solid transparent; border-bottom: 6px solid #777; border-top: 0; }
.c-ind { width: 30px; }
.c-pick { width: 43px; }
.c-job { width: 63px; }
.c-con { width: 82px; }
.c-mid { width: 109px; }
.c-cust { width: 121px; }
.c-name { width: 156px; }
tbody tr { height: 22px; background: #f1f4fa; color: #333; }
tbody tr:nth-child(odd) { height: 23px; }
tbody td { border-bottom: 1px solid #e3e3e6; }
tbody .flag { background: #ff0; }
tbody .assigned { background: #efc9a6; }
tbody .current { background: #cce5f7; outline: 1px dotted #222; outline-offset: -1px; color: #111; }
.current td:first-child { background: #fff; }
.current .st { color: #111; }
.current .md { color: #f08a1c; }
.current .cu { background: #f00; color: #fff; }
.hbar.wide { height: 21px; padding: 0 4px 0 8px; gap: 6px; }
.wide .hthumb { width: 18%; }
.buttons { height: 43px; flex: none; display: flex; align-items: center; gap: 7px; padding: 2px 83px 0 5px; border: solid #b9b9b9; border-width: 2px 0 1px; border-bottom-color: #cdcdcd; background: #f5f5f5; color: #555; }
.buttons button { width: 93px; height: 31px; display: flex; align-items: center; justify-content: center; gap: 6px; border: 1px solid #acacac; background: linear-gradient(#f2f2f2, #e4e4e4); }
.buttons .run { margin-left: 48px; }
.buttons .cancel { color: #a3a3a3; }
.buttons .total { margin-left: auto; }
.foot { height: 23px; flex: none; display: flex; align-items: stretch; padding: 0 3px 0 5px; }
.foot button { line-height: 23px; }
.foot .on { color: #1c7fd0; width: 27px; text-align: left; }
.foot .adv { width: 93px; border: solid #c9c9c9; border-width: 0 1px; color: #555; }
.spin { display: flex; align-items: center; width: 48px; margin: 4px 6px 0 30px; padding-right: 5px; background: #ff0; border: 1px solid #d6d6a0; border-bottom: 0; }
.spin input { flex: 1; width: 0; border: 0; background: none; padding: 2px 0 0 2px; appearance: textfield; }
.spin input::-webkit-inner-spin-button { appearance: none; }
.listname { width: 201px; margin-top: 4px; padding: 2px 1px 0; border: 1px solid #b5b5b5; border-bottom: 0; background: #fff; }
.foot label { display: flex; align-items: center; gap: 7px; margin-left: 3px; padding-top: 7px; }
.record { margin-left: auto; padding-top: 7px; }

.arrows { position: absolute; left: 0; top: 0; pointer-events: none; }
.callout { position: absolute; left: 771px; top: 364px; width: 195px; height: 69px; padding: 12px 20px 0; border: 2px solid #fb4748; background: #fff; color: #111; font-size: 12px; line-height: 14px; text-align: center; }
</style>
